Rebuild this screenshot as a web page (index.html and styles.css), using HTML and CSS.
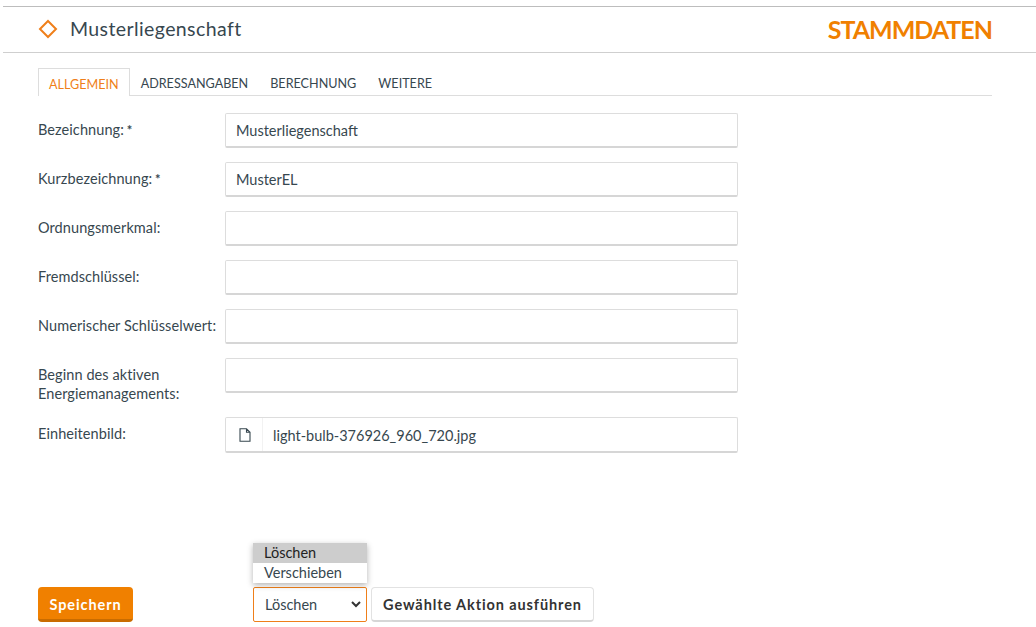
FILE: index.html
```html
<!DOCTYPE html>
<html lang="de">
<head>
  <meta charset="UTF-8" />
  <title>Stammdaten</title>
  <link rel="stylesheet" href="styles.css">
</head>
<body>
  <header class="page-head">
    <h1 class="head-title">
      <svg class="head-icon" width="20" height="20" viewBox="0 0 20 20"><path d="M10 2 L18 10 L10 18 L2 10 Z" fill="none" stroke="#ef7f1a" stroke-width="2"/></svg>
      Musterliegenschaft
    </h1>
    <div class="head-section">STAMMDATEN</div>
  </header>

  <main class="content">
    <ul class="tabs">
      <li class="tab active">ALLGEMEIN</li>
      <li class="tab">ADRESSANGABEN</li>
      <li class="tab">BERECHNUNG</li>
      <li class="tab">WEITERE</li>
    </ul>

    <form class="fields">
      <div class="row">
        <label>Bezeichnung: <span class="req">*</span></label>
        <input type="text" value="Musterliegenschaft">
      </div>
      <div class="row">
        <label>Kurzbezeichnung: <span class="req">*</span></label>
        <input type="text" value="MusterEL">
      </div>
      <div class="row">
        <label>Ordnungsmerkmal:</label>
        <input type="text">
      </div>
      <div class="row">
        <label>Fremdschlüssel:</label>
        <input type="text">
      </div>
      <div class="row">
        <label>Numerischer Schlüsselwert:</label>
        <input type="text">
      </div>
      <div class="row tall">
        <label>Beginn des aktiven<br>Energiemanagements:</label>
        <input type="text">
      </div>
      <div class="row">
        <label>Einheitenbild:</label>
        <div class="file">
          <span class="file-icon">
            <svg width="12" height="14" viewBox="0 0 12 14"><path d="M1 .75 H7.5 L11 4.25 V13.25 H1 Z M7.5 .75 V4.25 H11" fill="none" stroke="#37474f" stroke-width="1.1"/></svg>
          </span>
          <span class="file-name">light-bulb-376926_960_720.jpg</span>
        </div>
      </div>
    </form>

    <div class="actions">
      <button class="btn primary" type="button">Speichern</button>
      <div class="action-select">
        <ul class="select-menu">
          <li class="selected">Löschen</li>
          <li>Verschieben</li>
        </ul>
        <div class="select-box">
          Löschen
          <svg width="10" height="7" viewBox="0 0 10 7"><path d="M1 1 L5 5 L9 1" fill="none" stroke="#333" stroke-width="2"/></svg>
        </div>
      </div>
      <button class="btn secondary" type="button">Gewählte Aktion ausführen</button>
    </div>
  </main>
</body>
</html>
```

FILE: styles.css
```css
* { box-sizing: border-box; margin: 0; padding: 0; }
body {
  font-family: 'Lato', sans-serif;
  font-size: 14.5px;
  color: #37474f;
  background: #fff;
  padding: 6px 0 0 3px;
  height: 627px;
  overflow: hidden;
}

/* Header */
.page-head {
  height: 47px;
  border-top: 1px solid #bdbdbd;
  border-bottom: 1px solid #cfcfcf;
  padding: 0 44px 2px 35px;
  display: flex;
  justify-content: space-between;
  align-items: center;
}
.head-title {
  display: flex;
  align-items: center;
  gap: 12px;
  font-size: 19.5px;
  font-weight: 400;
  letter-spacing: .4px;
}
.head-section {
  font-size: 25px;
  font-weight: 700;
  letter-spacing: -1px;
  color: #f08000;
}

.content { padding: 15px 44px 0 35px; }

/* Tabs */
.tabs {
  list-style: none;
  display: flex;
  height: 28px;
  border-bottom: 1px solid #ddd;
}
.tab {
  padding: 0 11px;
  line-height: 31px;
  height: 28px;
  font-size: 12.6px;
}
.tab.active {
  color: #ef7f1a;
  border: 1px solid #ddd;
  border-bottom: none;
  background: #fff;
  padding: 0 10px;
}

/* Form */
.fields { padding-top: 17px; }
.row {
  display: grid;
  grid-template-columns: 187px 513px;
  height: 49px;
}
.row.tall { height: 59px; }
.row label {
  line-height: 19px;
  padding-top: 7px;
  letter-spacing: .08px;
  white-space: nowrap;
}
.req { font-weight: 700; font-size: 13px; margin-left: -1px; }
.row input, .file {
  height: 35px;
  border: 1px solid #ddd;
  border-bottom: 2px solid #d6d6d6;
  border-radius: 2px;
  background: #fff;
  font: inherit;
  color: inherit;
  padding: 0 10px;
}
.file {
  display: flex;
  align-items: center;
  height: 36px;
  padding: 0;
}
.file-icon {
  width: 37px;
  height: 100%;
  display: flex;
  align-items: center;
  justify-content: center;
  padding-left: 2px;
  border-right: 1px solid #f2f2f2;
}
.file-name { padding: 2px 0 0 10px; }

/* Actions */
.actions {
  display: flex;
  margin-top: 121px;
  height: 35px;
}
.btn {
  height: 35px;
  border-radius: 4px;
  font: inherit;
  font-weight: 700;
  letter-spacing: .9px;
  cursor: pointer;
}
.btn.primary {
  width: 95px;
  padding-top: 2px;
  background: #f08000;
  color: #fff;
  border: none;
  border-bottom: 3px solid #c96c00;
  margin-right: 120px;
}
.btn.secondary {
  width: 223px;
  margin-left: 4px;
  padding: 0;
  background: #fff;
  color: #333;
  border: 1px solid #e2e2e2;
  border-bottom: 2px solid #d6d6d6;
}
.action-select { position: relative; width: 114px; }
.select-box {
  height: 35px;
  border: 1px solid #ef7f1a;
  border-radius: 2px;
  padding: 0 5px 0 11px;
  display: flex;
  justify-content: space-between;
  align-items: center;
}
.select-menu {
  list-style: none;
  position: absolute;
  left: 0;
  right: 0;
  bottom: 39px;
  background: #fff;
  box-shadow: 0 2px 6px rgba(0,0,0,.3);
}
.select-menu li { height: 20px; line-height: 20px; padding-left: 11px; }
.select-menu .selected { background: #cdcdcd; color: #222; }
```
